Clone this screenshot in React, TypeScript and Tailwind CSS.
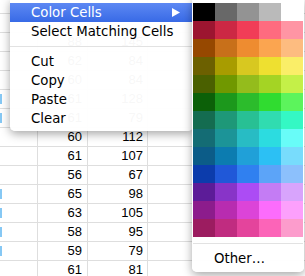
import React from "react";

const rows: { a: string; b: string; mark?: boolean }[] = [
  { a: "", b: "" },
  { a: "", b: "" },
  { a: "88", b: "145" },
  { a: "62", b: "84" },
  { a: "60", b: "84" },
  { a: "61", b: "128", mark: true },
  { a: "61", b: "79", mark: true },
  { a: "60", b: "112" },
  { a: "61", b: "107" },
  { a: "56", b: "67" },
  { a: "65", b: "98", mark: true },
  { a: "63", b: "105", mark: true },
  { a: "58", b: "95", mark: true },
  { a: "59", b: "79", mark: true },
  { a: "61", b: "81" },
];

// 13 rows x 5 swatches
const swatches: string[][] = [
  ["#000000", "#686868", "#939393", "#bababa", "#ffffff"],
  ["#9c1530", "#cc2844", "#f13d57", "#fe6b7f", "#ff95a4"],
  ["#964800", "#c8701a", "#ee8c30", "#fba550", "#fdbc80"],
  ["#6c6000", "#a89c00", "#d8c820", "#eee030", "#faee68"],
  ["#4a6000", "#709800", "#94bc1c", "#a4d424", "#c4f048"],
  ["#0c6008", "#1c981c", "#2cbc2c", "#30dc30", "#5cf45c"],
  ["#146c50", "#1e9878", "#28c094", "#30dcb0", "#34f8c4"],
  ["#146c74", "#1c9498", "#28bcc4", "#2cdce0", "#68fcf8"],
  ["#0c5c88", "#0c7cb0", "#20a0d8", "#2cc0f4", "#78dcfc"],
  ["#0c3cac", "#2058d8", "#3080f0", "#5ca4f8", "#8cc0fc"],
  ["#5c1c98", "#8834c8", "#ac4cf4", "#c47cf4", "#d8a4fc"],
  ["#8c1c8c", "#b82cb0", "#dc44d8", "#fc6cfc", "#fca0fc"],
  ["#9c1c60", "#c02c80", "#e4449c", "#fc64b8", "#fc9ccc"],
];

const MenuItem: React.FC<{ label: string }> = ({ label }) => (
  <div className="h-[19px] pl-[21px] flex items-center text-black">{label}</div>
);

const Separator: React.FC = () => (
  <div className="h-[11px] flex items-center">
    <div className="h-px w-full bg-[#e2e2e2]" />
  </div>
);

export default function App() {
  return (
    <div className="relative w-[305px] h-[276px] overflow-hidden bg-white">
      {/* spreadsheet behind the menus */}
      <div className="-mt-[5px] font-['Liberation_Sans',Arial,sans-serif] text-[13px] text-black">
        {rows.map((r, i) => (
          <div key={i} className="flex h-[19px] border-b border-[#dedede]">
            <div className="relative w-[38px] border-r border-[#dedede]">
              {r.mark && <div className="absolute left-0 top-[4px] w-[2px] h-[10px] bg-[#86c8f4]" />}
            </div>
            <div className="w-[50px] border-r border-[#dedede] pr-[5px] text-right leading-[18px]">{r.a}</div>
            <div className="w-[60px] border-r border-[#dedede] pr-[4px] text-right leading-[18px]">{r.b}</div>
            <div className="flex-1" />
          </div>
        ))}
      </div>

      {/* context menu */}
      <div className="absolute left-[10px] top-[-1px] w-[183px] pt-[4px] pb-[3px] bg-white/[0.97] rounded-b-[5px] shadow-[0_3px_10px_rgba(0,0,0,0.35)] font-['DejaVu_Sans',sans-serif] text-[13.3px]">
        <div className="h-[19px] pl-[21px] pr-[13px] flex items-center justify-between text-white bg-gradient-to-b from-[#5d88f3] to-[#386ae6]">
          <span>Color Cells</span>
          <svg width="8" height="9" viewBox="0 0 8 9">
            <polygon points="0,0 8,4.5 0,9" fill="#ffffff" />
          </svg>
        </div>
        <MenuItem label="Select Matching Cells" />
        <Separator />
        <MenuItem label="Cut" />
        <MenuItem label="Copy" />
        <MenuItem label="Paste" />
        <MenuItem label="Clear" />
      </div>

      {/* colour submenu */}
      <div className="absolute left-[192px] top-[-1px] w-[112px] pt-[4px] pb-[4px] px-[1px] bg-white/[0.97] rounded-b-[5px] shadow-[0_3px_10px_rgba(0,0,0,0.35)] font-['DejaVu_Sans',sans-serif] text-[13.3px]">
        <div className="grid grid-cols-[repeat(5,22px)]">
          {swatches.flat().map((c, i) => (
            <div key={i} className="h-[18px]" style={{ backgroundColor: c }} />
          ))}
        </div>
        <div className="mt-[6px] h-px bg-[#e2e2e2]" />
        <div className="mt-[5px] h-[19px] pl-[21px] flex items-center text-black">Other…</div>
      </div>
    </div>
  );
}
